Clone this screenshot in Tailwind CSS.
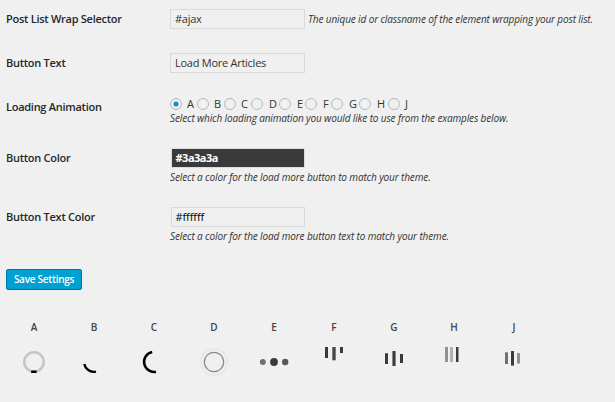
<!DOCTYPE html>
<html lang="en">
<head>
<meta charset="utf-8">
<title>Load More Settings</title>
<script src="https://cdn.jsdelivr.net/npm/@tailwindcss/browser@4"></script>
</head>
<body class="w-[615px] h-[402px] overflow-hidden bg-[#f0f0f0] font-['Open_Sans',sans-serif] text-[11px] text-[#333]">
<form class="pl-[6px] pt-[9px]">
  <div class="flex h-[44px] items-start">
    <label class="w-[164px] leading-[20px] font-semibold tracking-[-0.27px] text-[#23282d]">Post List Wrap Selector</label>
    <div class="w-[135px] h-[20px] border border-[#d9d9d9] px-1 leading-[18px] tracking-[-0.26px]">#ajax</div>
    <em class="ml-[3px] text-[10px] leading-[20px] tracking-[-0.125px] whitespace-nowrap">The unique id or classname of the element wrapping your post list.</em>
  </div>
  <div class="flex h-[45px] items-start">
    <label class="w-[164px] leading-[20px] font-semibold tracking-[-0.27px] text-[#23282d]">Button Text</label>
    <div class="w-[135px] h-[20px] border border-[#d9d9d9] px-1 leading-[18px] tracking-[-0.26px]">Load More Articles</div>
  </div>
  <div class="flex h-[50px] items-start">
    <label class="w-[164px] leading-[18px] font-semibold tracking-[-0.27px] text-[#23282d]">Loading Animation</label>
    <div>
      <div class="flex h-[12px] leading-[12px]">
        <span class="flex w-[27px] gap-[5px]"><i class="flex size-[12px] shrink-0 items-center justify-center rounded-full border border-[#b4b9be]"><b class="size-[4px] rounded-full bg-[#0d8fc9] ring-[0.5px] ring-[#0d8fc9]"></b></i>A</span>
        <span class="flex w-[27px] gap-[5px]"><i class="size-[12px] shrink-0 rounded-full border border-[#b4b9be]"></i>B</span>
        <span class="flex w-[27px] gap-[5px]"><i class="size-[12px] shrink-0 rounded-full border border-[#b4b9be]"></i>C</span>
        <span class="flex w-[28px] gap-[6px]"><i class="size-[12px] shrink-0 rounded-full border border-[#b4b9be]"></i>D</span>
        <span class="flex w-[26px] gap-[6px]"><i class="size-[12px] shrink-0 rounded-full border border-[#b4b9be]"></i>E</span>
        <span class="flex w-[26px] gap-[6px]"><i class="size-[12px] shrink-0 rounded-full border border-[#b4b9be]"></i>F</span>
        <span class="flex w-[28px] gap-[6px]"><i class="size-[12px] shrink-0 rounded-full border border-[#b4b9be]"></i>G</span>
        <span class="flex w-[29px] gap-[6px]"><i class="size-[12px] shrink-0 rounded-full border border-[#b4b9be]"></i>H</span>
        <span class="flex w-[27px] gap-[5px]"><i class="size-[12px] shrink-0 rounded-full border border-[#b4b9be]"></i>J</span>
      </div>
      <em class="block text-[10px] leading-[16px] tracking-[-0.13px] whitespace-nowrap">Select which loading animation you would like to use from the examples below.</em>
    </div>
  </div>
  <div class="flex h-[59px] items-start">
    <label class="w-[164px] leading-[20px] font-semibold tracking-[-0.27px] text-[#23282d]">Button Color</label>
    <div>
      <div class="ml-px w-[134px] h-[20px] border border-[#ddd] bg-[#3a3a3a] px-[3.5px] leading-[18px] font-bold tracking-[-0.5px] text-white">#3a3a3a</div>
      <em class="block text-[10px] leading-[19px] tracking-[-0.125px] whitespace-nowrap">Select a color for the load more button to match your theme.</em>
    </div>
  </div>
  <div class="flex h-[62px] items-start">
    <label class="w-[164px] leading-[20px] font-semibold tracking-[-0.27px] text-[#23282d]">Button Text Color</label>
    <div>
      <div class="ml-px w-[134px] h-[20px] border border-[#d9d9d9] px-[3.5px] leading-[18px] tracking-[-0.1px] text-black">#ffffff</div>
      <em class="block text-[10px] leading-[19px] tracking-[-0.125px] whitespace-nowrap">Select a color for the load more button text to match your theme.</em>
    </div>
  </div>
  <button type="button" class="block w-[76px] h-[21px] rounded-[2px] border border-[#0073aa] bg-[#00a0d2] text-[10px] leading-[19px] font-semibold tracking-[-0.27px] text-white whitespace-nowrap">Save Settings</button>
</form>
<div class="ml-1 mt-[30px] grid w-[540px] grid-cols-9 text-center text-[10px] leading-[14px] font-semibold text-[#444]">
  <span>A</span><span>B</span><span>C</span><span>D</span><span>E</span><span>F</span><span>G</span><span>H</span><span>J</span>
</div>
<div class="ml-1 mt-[6px] grid w-[540px] grid-cols-9">
  <svg width="60" height="44" fill="none" stroke-width="2.6"><circle cx="30" cy="22" r="9.7" stroke="#c6c6c6"/><path d="M27.2 31.5Q30 32.1 32.6 31.5" stroke="#000"/></svg>
  <svg width="60" height="44" fill="none" stroke="#000" stroke-width="2.3"><path d="M20.3 24A10 10 0 0 0 32 31.7"/></svg>
  <svg width="60" height="44" fill="none" stroke="#000" stroke-width="2.5"><path d="M28.2 12A10 10 0 0 0 32 31.7"/></svg>
  <svg width="60" height="44" fill="none"><circle cx="30" cy="22" r="13" stroke="#e8e8e8" stroke-width="2"/><circle cx="30" cy="22" r="9.7" stroke="#888" stroke-width="1.3"/></svg>
  <svg width="60" height="44"><circle cx="18.8" cy="22" r="3" fill="#707070"/><circle cx="30" cy="22" r="3.9" fill="#3a3a3a"/><circle cx="41.2" cy="22" r="3.2" fill="#585858"/></svg>
  <svg width="60" height="44" fill="#3a3a3a"><path d="M21 7h3v11h-3zM36 7h3v6h-3z"/><path d="M28.3 7h3.4v13.3h-3.4z" fill="#484848"/></svg>
  <svg width="60" height="44" fill="#3a3a3a"><path d="M21 13.3h3V24h-3zM36 14h3v9h-3z"/><path d="M28 11h4v15h-4z" fill="#8a8a8a"/><path d="M29 11h2v15h-2z"/></svg>
  <svg width="60" height="44"><path d="M21 7h3v15h-3z" fill="#909090"/><path d="M26 7h3v15h-3z" fill="#b0b0b0"/><path d="M32 7h2v15h-2z" fill="#3a3a3a"/><path d="M34 7h1v15h-1z" fill="#999"/></svg>
  <svg width="60" height="44"><path d="M21 12.3h3V24h-3z" fill="#707070"/><path d="M27 11h3v14.6h-3z" fill="#3a3a3a"/><path d="M33 13h3v10.6h-3z" fill="#909090"/></svg>
</div>
</body>
</html>
